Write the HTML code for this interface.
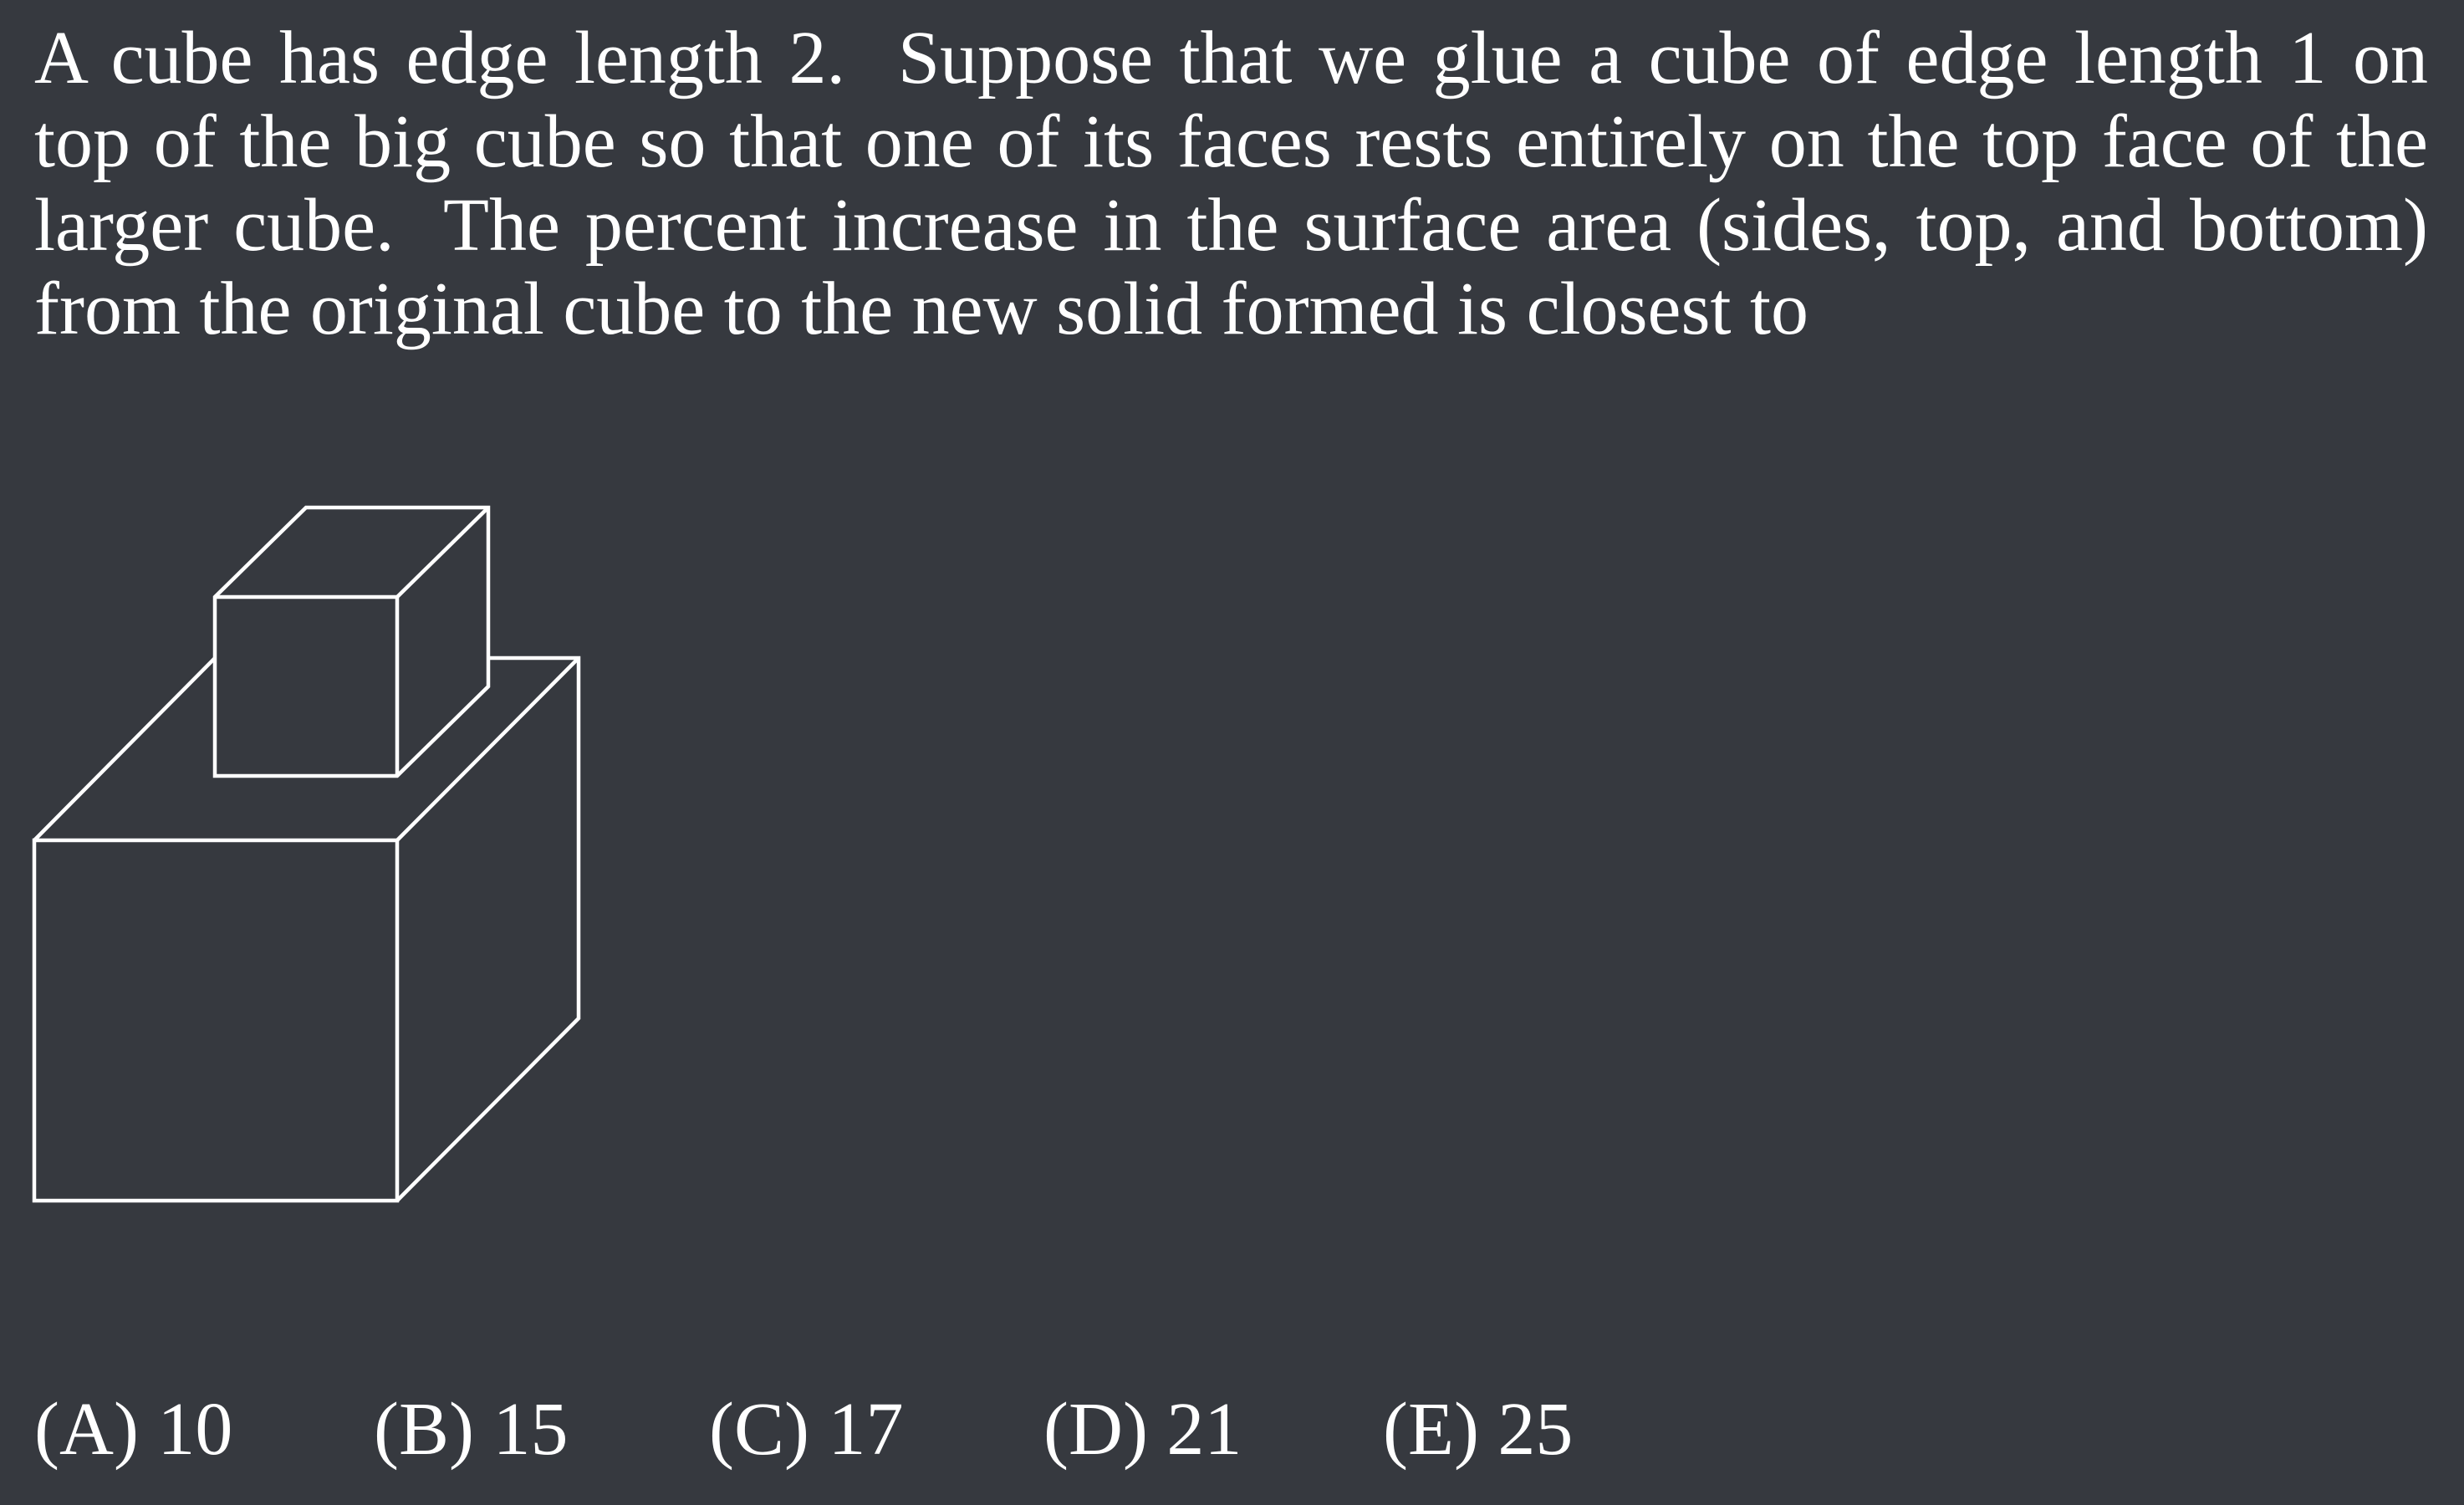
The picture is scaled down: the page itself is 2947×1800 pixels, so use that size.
<!DOCTYPE html>
<html><head><meta charset="utf-8"><style>
html,body{margin:0;padding:0;}
body{width:2947px;height:1800px;background:#36393f;overflow:hidden;position:relative;color:#fff;font-family:"Liberation Serif",serif;}
.l{position:absolute;left:41px;width:2863px;font-size:90px;line-height:100px;text-align:justify;text-align-last:justify;white-space:nowrap;}
.last{text-align-last:left;}
.a{position:absolute;top:1660px;font-size:90px;line-height:100px;white-space:nowrap;}
svg{position:absolute;left:0;top:0;}
</style></head><body>
<div class="l" style="top:20px;white-space:normal">A cube has edge length 2.&nbsp; Suppose that we glue a cube of edge length 1 on</div>
<div class="l" style="top:120px;white-space:normal">top of the big cube so that one of its faces rests entirely on the top face of the</div>
<div class="l" style="top:220px;white-space:normal">larger cube.&nbsp; The percent increase in the surface area (sides, top, and bottom)</div>
<div class="l last" style="top:320px;">from the original cube to the new solid formed is closest to</div>
<svg width="2947" height="1800" viewBox="0 0 2947 1800">
<g stroke="#fff" stroke-width="4.5" fill="none" stroke-linejoin="miter">
<rect x="41" y="1005" width="434" height="431"/>
<path d="M41 1005 L257 787 L692 787 L692 1218 L475 1436 M475 1005 L692 787"/>
<path d="M257 714 L366 607 L584 607 L584 821 L475 928 L257 928 Z" fill="#36393f"/>
<path d="M257 714 L475 714 L475 928 M475 714 L584 607"/>
</g>
</svg>
<div class="a" style="left:41px">(A) 10</div>
<div class="a" style="left:447px">(B) 15</div>
<div class="a" style="left:848px">(C) 17</div>
<div class="a" style="left:1248px">(D) 21</div>
<div class="a" style="left:1654px">(E) 25</div>
</body></html>
